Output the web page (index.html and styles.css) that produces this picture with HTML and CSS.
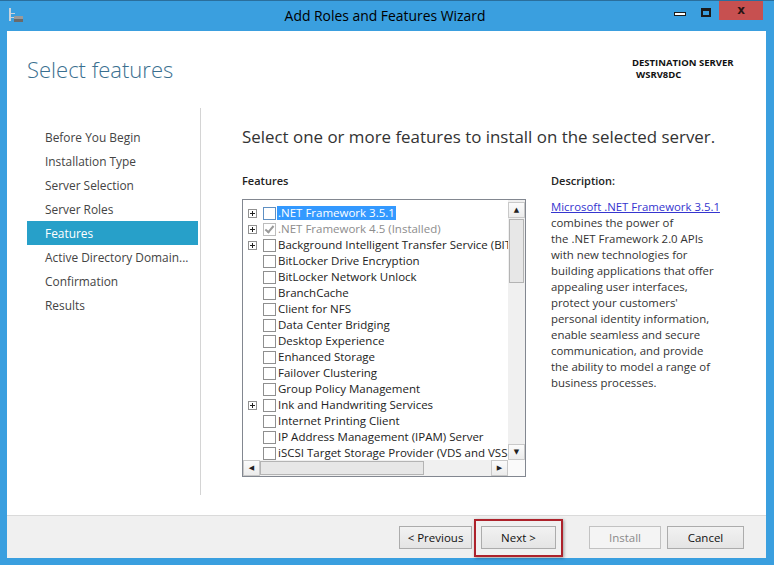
FILE: index.html
```html
<!DOCTYPE html>
<html>
<head>
    <title>Add Roles and Features Wizard</title>
    <link rel="stylesheet" href="styles.css">
</head>
<body>
    <div class="window">
        <div class="title-bar">
            <svg class="app-icon" width="16" height="16" viewBox="0 0 16 16">
                <rect x="1" y="1" width="2" height="13" fill="#c9d3dc"/>
                <rect x="3" y="6" width="4" height="1" fill="#c9d3dc"/>
                <rect x="3" y="10" width="4" height="1" fill="#c9d3dc"/>
                <rect x="6" y="9" width="9" height="3" fill="#9a9a9a"/>
                <rect x="6" y="12" width="9" height="3" fill="#6a6a6a"/>
            </svg>
            <div class="title">Add Roles and Features Wizard</div>
            <div class="controls">
                <span class="ctl-min"></span>
                <span class="ctl-max"></span>
                <span class="ctl-close">x</span>
            </div>
        </div>

        <div class="client">
            <div class="header">
                <h1>Select features</h1>
                <div class="dest">
                    <div>DESTINATION SERVER</div>
                    <div class="dest-name">WSRV8DC</div>
                </div>
            </div>

            <div class="body">
                <ul class="nav">
                    <li>Before You Begin</li>
                    <li>Installation Type</li>
                    <li>Server Selection</li>
                    <li>Server Roles</li>
                    <li class="active">Features</li>
                    <li>Active Directory Domain...</li>
                    <li>Confirmation</li>
                    <li>Results</li>
                </ul>

                <div class="page">
                    <h2>Select one or more features to install on the selected server.</h2>
                    <div class="cols">
                        <div class="features">
                            <div class="label">Features</div>
                            <div class="listbox">
                                <div class="list-main">
                                    <div class="rows">
                                        <div class="row"><span class="exp plus"></span><span class="chk focus"></span><span class="txt sel">.NET Framework 3.5.1</span></div>
                                        <div class="row dis"><span class="exp plus"></span><span class="chk checked"></span><span class="txt">.NET Framework 4.5 (Installed)</span></div>
                                        <div class="row"><span class="exp plus"></span><span class="chk"></span><span class="txt">Background Intelligent Transfer Service (BITS)</span></div>
                                        <div class="row"><span class="exp"></span><span class="chk"></span><span class="txt">BitLocker Drive Encryption</span></div>
                                        <div class="row"><span class="exp"></span><span class="chk"></span><span class="txt">BitLocker Network Unlock</span></div>
                                        <div class="row"><span class="exp"></span><span class="chk"></span><span class="txt">BranchCache</span></div>
                                        <div class="row"><span class="exp"></span><span class="chk"></span><span class="txt">Client for NFS</span></div>
                                        <div class="row"><span class="exp"></span><span class="chk"></span><span class="txt">Data Center Bridging</span></div>
                                        <div class="row"><span class="exp"></span><span class="chk"></span><span class="txt">Desktop Experience</span></div>
                                        <div class="row"><span class="exp"></span><span class="chk"></span><span class="txt">Enhanced Storage</span></div>
                                        <div class="row"><span class="exp"></span><span class="chk"></span><span class="txt">Failover Clustering</span></div>
                                        <div class="row"><span class="exp"></span><span class="chk"></span><span class="txt">Group Policy Management</span></div>
                                        <div class="row"><span class="exp plus"></span><span class="chk"></span><span class="txt">Ink and Handwriting Services</span></div>
                                        <div class="row"><span class="exp"></span><span class="chk"></span><span class="txt">Internet Printing Client</span></div>
                                        <div class="row"><span class="exp"></span><span class="chk"></span><span class="txt">IP Address Management (IPAM) Server</span></div>
                                        <div class="row"><span class="exp"></span><span class="chk"></span><span class="txt">iSCSI Target Storage Provider (VDS and VSS</span></div>
                                    </div>
                                    <div class="vscroll">
                                        <div class="sb-btn">&#9650;</div>
                                        <div class="v-track"><div class="v-thumb"></div></div>
                                        <div class="sb-btn">&#9660;</div>
                                    </div>
                                </div>
                                <div class="hscroll">
                                    <div class="sb-btn">&#9664;</div>
                                    <div class="h-track"><div class="h-thumb"></div></div>
                                    <div class="sb-btn">&#9654;</div>
                                    <div class="corner"></div>
                                </div>
                            </div>
                        </div>

                        <div class="desc">
                            <div class="label">Description:</div>
                            <p><a href="#">Microsoft .NET Framework 3.5.1</a><br>
                            combines the power of<br>
                            the .NET Framework 2.0 APIs<br>
                            with new technologies for<br>
                            building applications that offer<br>
                            appealing user interfaces,<br>
                            protect your customers'<br>
                            personal identity information,<br>
                            enable seamless and secure<br>
                            communication, and provide<br>
                            the ability to model a range of<br>
                            business processes.</p>
                        </div>
                    </div>
                </div>
            </div>

            <div class="footer">
                <button class="button">&lt; Previous</button>
                <span class="marked"><button class="button next">Next &gt;</button></span>
                <button class="button install" disabled>Install</button>
                <button class="button cancel">Cancel</button>
            </div>
        </div>
    </div>
</body>
</html>
```

FILE: styles.css
```css
body {
    margin: 0;
    padding: 0;
    font-family: 'Open Sans', 'Noto Sans', sans-serif;
    background: #3a9fdf;
    color: #333;
}

.window {
    width: 774px;
    height: 565px;
    display: flex;
    flex-direction: column;
    background: #3a9fdf;
    border-top: 1px solid #2a6e9c;
    box-sizing: border-box;
}

.title-bar {
    height: 30px;
    display: grid;
    grid-template-columns: 1fr auto 1fr;
    align-items: start;
}

.app-icon {
    margin: 6px 0 0 8px;
}

.title {
    padding-top: 5px;
    font-size: 13.9px;
    color: #000;
    padding-right: 4px;
}

.controls {
    justify-self: end;
    display: flex;
    align-items: flex-start;
    margin-right: 11px;
}

.ctl-min {
    width: 10px;
    height: 2px;
    margin-top: 11px;
    background: #fff;
    border: 1px solid #1b1b1b;
}

.ctl-max {
    width: 6px;
    height: 4px;
    margin: 7px 0 0 15px;
    border: 2px solid #1b1b1b;
    border-top-width: 3px;
}

.ctl-close {
    width: 44px;
    height: 19px;
    margin-left: 8px;
    background: #c75050;
    color: #2b1414;
    font-family: 'DejaVu Sans', sans-serif;
    font-weight: bold;
    font-size: 12px;
    line-height: 18px;
    text-align: center;
}

.client {
    flex: 1;
    margin: 0 8px 7px 7px;
    background: #fff;
    display: flex;
    flex-direction: column;
}

.header {
    height: 77px;
    display: flex;
    align-items: flex-start;
}

h1 {
    margin: 0;
    padding: 23px 0 0 20px;
    font-size: 22px;
    font-weight: 300;
    line-height: 30px;
    color: #3a6f8f;
}

.dest {
    margin-left: auto;
    width: 134px;
    padding-top: 26px;
    font-size: 9.5px;
    font-weight: bold;
    line-height: 12px;
    color: #111;
}

.dest-name {
    padding-left: 4px;
}

.body {
    flex: 1;
    display: flex;
}

.nav {
    list-style: none;
    margin: 0 0 20px 20px;
    padding: 17px 2px 0 0;
    width: 171px;
    border-right: 1px solid #d4d4d4;
}

.nav li {
    height: 24px;
    line-height: 24px;
    padding-left: 18px;
    font-size: 11.9px;
    color: #444;
    white-space: nowrap;
}

.nav li.active {
    background: #27a0c9;
    color: #fff;
}

.page {
    flex: 1;
    padding: 17px 0 0 41px;
}

h2 {
    margin: 0;
    font-size: 16.9px;
    font-weight: normal;
    line-height: 24px;
    color: #333;
}

.cols {
    display: flex;
    gap: 25px;
    margin-top: 24px;
}

.label {
    font-size: 11px;
    font-weight: 600;
    line-height: 16px;
    margin-bottom: 10px;
    color: #222;
}

.features {
    width: 284px;
}

.listbox {
    height: 278px;
    border: 1px solid #828790;
    box-sizing: border-box;
    display: flex;
    flex-direction: column;
}

.list-main {
    flex: 1;
    display: flex;
    min-height: 0;
}

.rows {
    flex: 1;
    overflow: hidden;
    padding: 5px 0 0 5px;
}

.row {
    height: 16px;
    display: flex;
    align-items: center;
    font-size: 11.5px;
    color: #222;
    white-space: nowrap;
}

.row.dis {
    color: #8d8d8d;
}

.exp {
    width: 9px;
    height: 9px;
    flex: none;
    box-sizing: border-box;
    position: relative;
}

.exp.plus {
    border: 1px solid #919191;
}

.exp.plus::before,
.exp.plus::after {
    content: "";
    position: absolute;
    background: #222;
}

.exp.plus::before {
    left: 1px;
    top: 3px;
    width: 5px;
    height: 1px;
}

.exp.plus::after {
    left: 3px;
    top: 1px;
    width: 1px;
    height: 5px;
}

.chk {
    width: 13px;
    height: 13px;
    flex: none;
    margin-left: 6px;
    border: 1px solid #8f8f8f;
    box-sizing: border-box;
    background: #fff;
    position: relative;
}

.chk.focus {
    border-color: #5e8fc2;
}

.chk.checked {
    border-color: #bdbdbd;
}

.chk.checked::after {
    content: "";
    position: absolute;
    left: 3px;
    top: 0px;
    width: 3px;
    height: 7px;
    border: solid #9a9a9a;
    border-width: 0 2px 2px 0;
    transform: rotate(40deg);
}

.txt {
    margin-left: 1px;
    padding: 0 1px;
    line-height: 14px;
}

.txt.sel {
    background: #3399ff;
    color: #fff;
}

.vscroll {
    width: 17px;
    display: flex;
    flex-direction: column;
    background: #f0f0f0;
}

.sb-btn {
    width: 17px;
    height: 16px;
    flex: none;
    box-sizing: border-box;
    border: 1px solid #c9c9c9;
    background: linear-gradient(#fbfbfb, #ececec);
    font-size: 7px;
    line-height: 14px;
    text-align: center;
    color: #222;
    font-family: 'DejaVu Sans', sans-serif;
}

.vscroll .sb-btn:first-child {
    margin-top: 2px;
}

.v-track {
    flex: 1;
    padding: 1px 1px;
}

.v-thumb {
    height: 62px;
    border: 1px solid #b4b4b4;
    background: #e7e7e7;
}

.hscroll {
    height: 16px;
    display: flex;
    background: #f0f0f0;
}

.h-track {
    flex: 1;
    padding: 1px 0;
}

.h-thumb {
    width: 162px;
    height: 12px;
    border: 1px solid #b4b4b4;
    background: #e7e7e7;
}

.corner {
    width: 17px;
    background: #fafafa;
}

.desc {
    flex: 1;
}

.desc p {
    margin: 0;
    font-size: 11.4px;
    line-height: 16px;
    color: #333;
}

.desc a {
    color: #3535cf;
}

.footer {
    border-top: 1px solid #dadada;
    background: #f0f0f0;
    display: flex;
    align-items: flex-start;
    justify-content: flex-end;
    padding: 10px 22px 0 0;
    box-sizing: border-box;
    height: 43px;
}

.button {
    height: 23px;
    width: 73px;
    padding: 0;
    border: 1px solid #acacac;
    background: linear-gradient(#f2f2f2, #e4e4e4);
    font-family: 'Open Sans', 'Noto Sans', sans-serif;
    font-size: 11.5px;
    color: #111;
}

.marked {
    position: relative;
    margin-left: 9px;
    display: flex;
}

.marked::after {
    content: "";
    position: absolute;
    left: -7px;
    top: -7px;
    right: -7px;
    bottom: -8px;
    border: 2px solid #ad222b;
    box-shadow: 1px 1px 3px rgba(0, 0, 0, 0.35);
}

.next {
    width: 75px;
}

.install {
    margin-left: 33px;
    width: 72px;
    color: #8a8a8a;
    border-color: #c2c2c2;
    background: #f4f4f4;
}

.cancel {
    margin-left: 6px;
    width: 77px;
}
```
